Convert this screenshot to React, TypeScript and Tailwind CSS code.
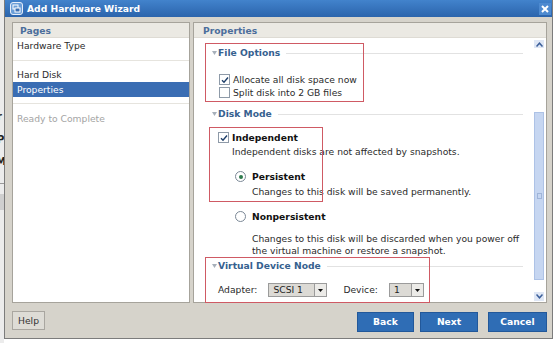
import React from 'react';

function Triangle() {
  return (
    <svg width="5" height="4" viewBox="0 0 5 4" className="flex-none">
      <path d="M0 0 L5 0 L2.5 4 Z" fill="#a7b0ba" />
    </svg>
  );
}

function SectionHeading({ title, className }: { title: string; className?: string }) {
  return (
    <div className={`flex items-center h-[14px] pl-[18px] pr-[10px] ${className ?? ''}`}>
      <Triangle />
      <span className="ml-[1px] font-bold text-[#36618f] whitespace-nowrap">{title}</span>
      <div className="flex-1 h-px bg-[#e2e2e2] ml-[6px]" />
    </div>
  );
}

function Checkbox({ checked }: { checked?: boolean }) {
  return (
    <div className="flex-none w-[11px] h-[11px] border border-[#8e9aa8] bg-white flex items-center justify-center">
      {checked && (
        <svg width="8" height="8" viewBox="0 0 8 8">
          <path d="M1 4.2 L3 6.2 L7 1.5" stroke="#1f3f6a" strokeWidth="1.4" fill="none" />
        </svg>
      )}
    </div>
  );
}

function Radio({ checked }: { checked?: boolean }) {
  return (
    <div className="flex-none w-[11px] h-[11px] rounded-full border border-[#7b8896] bg-white flex items-center justify-center">
      {checked && <div className="w-[4px] h-[4px] rounded-full bg-[#2e7a4c]" />}
    </div>
  );
}

function Select({ value, width }: { value: string; width: string }) {
  return (
    <div className={`flex h-[14px] border border-[#9b9b9b] bg-[#dcdad5] ${width}`}>
      <div className="flex-1 pl-[4px] leading-[12px] text-[#222]">{value}</div>
      <div className="w-[12px] border-l border-[#9b9b9b] bg-[#ecebe8] flex items-center justify-center">
        <svg width="5" height="3" viewBox="0 0 5 3">
          <path d="M0 0 L5 0 L2.5 3 Z" fill="#111" />
        </svg>
      </div>
    </div>
  );
}

function BlueButton({ label, width }: { label: string; width: string }) {
  return (
    <div
      className={`h-[20px] ${width} bg-[#2f6db5] border border-[#22589a] text-white font-bold flex items-center justify-center`}
    >
      {label}
    </div>
  );
}

export default function App() {
  return (
    <div className="w-[557px] h-[343px] bg-white flex overflow-hidden font-['DejaVu_Sans',sans-serif] text-[9.2px] text-[#2b2b2b]">
      {/* window behind */}
      <div className="w-[4px] flex-none bg-[#ececec] overflow-hidden flex flex-col font-bold text-[10px] text-[#222]">
        <div className="h-[110px]" />
        <span className="-ml-[3px] leading-[14px]">r</span>
        <span className="mt-[9px] -ml-[3px] leading-[14px]">P</span>
        <span className="mt-[8px] -ml-[4px] leading-[14px]">M</span>
        <div className="mt-[14px] h-px bg-[#9a9a9a]" />
        <div className="mt-[10px] h-[16px] bg-[#cfcfcf]" />
      </div>

      {/* wizard window */}
      <div className="w-[549px] h-[339px] flex-none flex flex-col border-x border-b border-[#7c7c7c] bg-[#d6d3cb]">
        <div className="h-[17px] flex-none flex items-center bg-gradient-to-b from-[#4283cc] to-[#2b64ac] pl-[5px] pr-[1px]">
          <svg width="13" height="13" viewBox="0 0 13 13" className="flex-none">
            <rect x="0.5" y="0.5" width="12" height="12" rx="2.5" fill="#6a9ed8" stroke="#e6eefa" />
            <rect x="3" y="3" width="5" height="4" fill="none" stroke="#ffffff" strokeWidth="1" />
            <rect x="5" y="6" width="5" height="4" fill="#3a6fb3" stroke="#ffffff" strokeWidth="1" />
          </svg>
          <span className="ml-[4px] font-bold text-white text-[9.2px]">Add Hardware Wizard</span>
          <div className="flex-1" />
          <div className="w-[12px] h-[12px] bg-[#4d8ad0] flex items-center justify-center">
            <svg width="8" height="8" viewBox="0 0 8 8">
              <path d="M1 1 L7 7 M7 1 L1 7" stroke="#ffffff" strokeWidth="2" />
            </svg>
          </div>
        </div>

        {/* panels */}
        <div className="flex gap-[3px] pl-[7px] pr-[5px] pt-[5px] h-[286px] flex-none">
          {/* pages */}
          <div className="w-[178px] h-[281px] border border-[#a6a39b] bg-white flex flex-col">
            <div className="h-[15px] bg-[#ebe9e3] border-b border-[#dedbd4] pl-[7px] font-bold text-[#4b6e9c] leading-[15px]">
              Pages
            </div>
            <div className="h-[15px] pl-[4px] leading-[15px]">Hardware Type</div>
            <div className="mt-[7px] h-px bg-[#e6e4de]" />
            <div className="mt-[6px] h-[15px] pl-[4px] leading-[15px]">Hard Disk</div>
            <div className="h-[15px] pl-[4px] leading-[15px] bg-[#3a6db3] text-white">Properties</div>
            <div className="mt-[6px] h-px bg-[#e6e4de]" />
            <div className="mt-[7px] h-[15px] pl-[4px] leading-[15px] text-[#a4a4a4]">Ready to Complete</div>
          </div>

          {/* properties */}
          <div className="w-[354px] h-[281px] border border-[#a6a39b] bg-white flex flex-col">
            <div className="h-[15px] flex-none bg-[#ebe9e3] border-b border-[#dedbd4] pl-[9px] font-bold text-[#4b6e9c] leading-[15px]">
              Properties
            </div>
            <div className="flex flex-1">
              <div className="relative flex-1 flex flex-col">
                <SectionHeading title="File Options" className="mt-[8px]" />
                <div className="mt-[13px] flex items-center h-[13px] pl-[25px] gap-[3px]">
                  <Checkbox checked />
                  <span>Allocate all disk space now</span>
                </div>
                <div className="flex items-center h-[13px] pl-[25px] gap-[3px]">
                  <Checkbox />
                  <span>Split disk into 2 GB files</span>
                </div>

                <SectionHeading title="Disk Mode" className="mt-[8px]" />
                <div className="mt-[10px] flex items-center h-[13px] pl-[24px] gap-[3px]">
                  <Checkbox checked />
                  <span className="font-bold text-[#111]">Independent</span>
                </div>
                <div className="mt-[1px] h-[13px] leading-[13px] pl-[38px]">
                  Independent disks are not affected by snapshots.
                </div>
                <div className="mt-[12px] flex items-center h-[13px] pl-[41px] gap-[6px]">
                  <Radio checked />
                  <span className="font-bold text-[#111]">Persistent</span>
                </div>
                <div className="mt-[2px] h-[13px] leading-[13px] pl-[58px]">
                  Changes to this disk will be saved permanently.
                </div>
                <div className="mt-[12px] flex items-center h-[13px] pl-[41px] gap-[6px]">
                  <Radio />
                  <span className="font-bold text-[#111]">Nonpersistent</span>
                </div>
                <div className="mt-[10px] leading-[12px] pl-[58px]">
                  <div>Changes to this disk will be discarded when you power off</div>
                  <div>the virtual machine or restore a snapshot.</div>
                </div>

                <SectionHeading title="Virtual Device Node" className="mt-[2px]" />
                <div className="mt-[10px] flex items-center h-[14px] pl-[24px]">
                  <span>Adapter:</span>
                  <div className="ml-[11px]">
                    <Select value="SCSI 1" width="w-[59px]" />
                  </div>
                  <span className="ml-[16px]">Device:</span>
                  <div className="ml-[11px]">
                    <Select value="1" width="w-[35px]" />
                  </div>
                </div>

                {/* annotation boxes */}
                <div className="absolute left-[11px] top-[5px] w-[159px] h-[59px] border border-[#cf5a64]" />
                <div className="absolute left-[15px] top-[89px] w-[114px] h-[75px] border border-[#cf5a64]" />
                <div className="absolute left-[11px] top-[219px] w-[225px] h-[46px] border border-[#cf5a64]" />
              </div>

              {/* scrollbar */}
              <div className="w-[13px] flex-none flex flex-col items-center pr-[1px] pt-[2px] pb-[1px]">
                <div className="w-[10px] h-[8px] bg-[#dfe7f5] flex items-center justify-center">
                  <svg width="7" height="5" viewBox="0 0 7 5">
                    <path d="M0.5 4.5 L3.5 1.2 L6.5 4.5" stroke="#3b5f9a" strokeWidth="1.5" fill="none" />
                  </svg>
                </div>
                <div className="h-[64px]" />
                <div className="w-[10px] h-[168px] bg-[#c6d6f1] border border-[#adc2e6] flex items-center justify-center">
                  <div className="w-[5px] h-[6px] border border-[#9fb4d8]" />
                </div>
                <div className="flex-1" />
                <div className="w-[10px] h-[9px] bg-[#dfe7f5] flex items-center justify-center">
                  <svg width="7" height="5" viewBox="0 0 7 5">
                    <path d="M0.5 0.5 L3.5 3.8 L6.5 0.5" stroke="#3b5f9a" strokeWidth="1.5" fill="none" />
                  </svg>
                </div>
              </div>
            </div>
          </div>
        </div>

        {/* footer */}
        <div className="flex flex-1 items-start pl-[7px] pr-[5px]">
          <div className="mt-[8px] w-[33px] h-[19px] bg-[#dedcd6] border border-[#a9a6a0] flex items-center justify-center text-[#333]">
            Help
          </div>
          <div className="flex-1" />
          <div className="mt-[9px] flex">
            <BlueButton label="Back" width="w-[57px]" />
            <div className="ml-[6px]">
              <BlueButton label="Next" width="w-[58px]" />
            </div>
            <div className="ml-[10px]">
              <BlueButton label="Cancel" width="w-[59px]" />
            </div>
          </div>
        </div>
      </div>
    </div>
  );
}
